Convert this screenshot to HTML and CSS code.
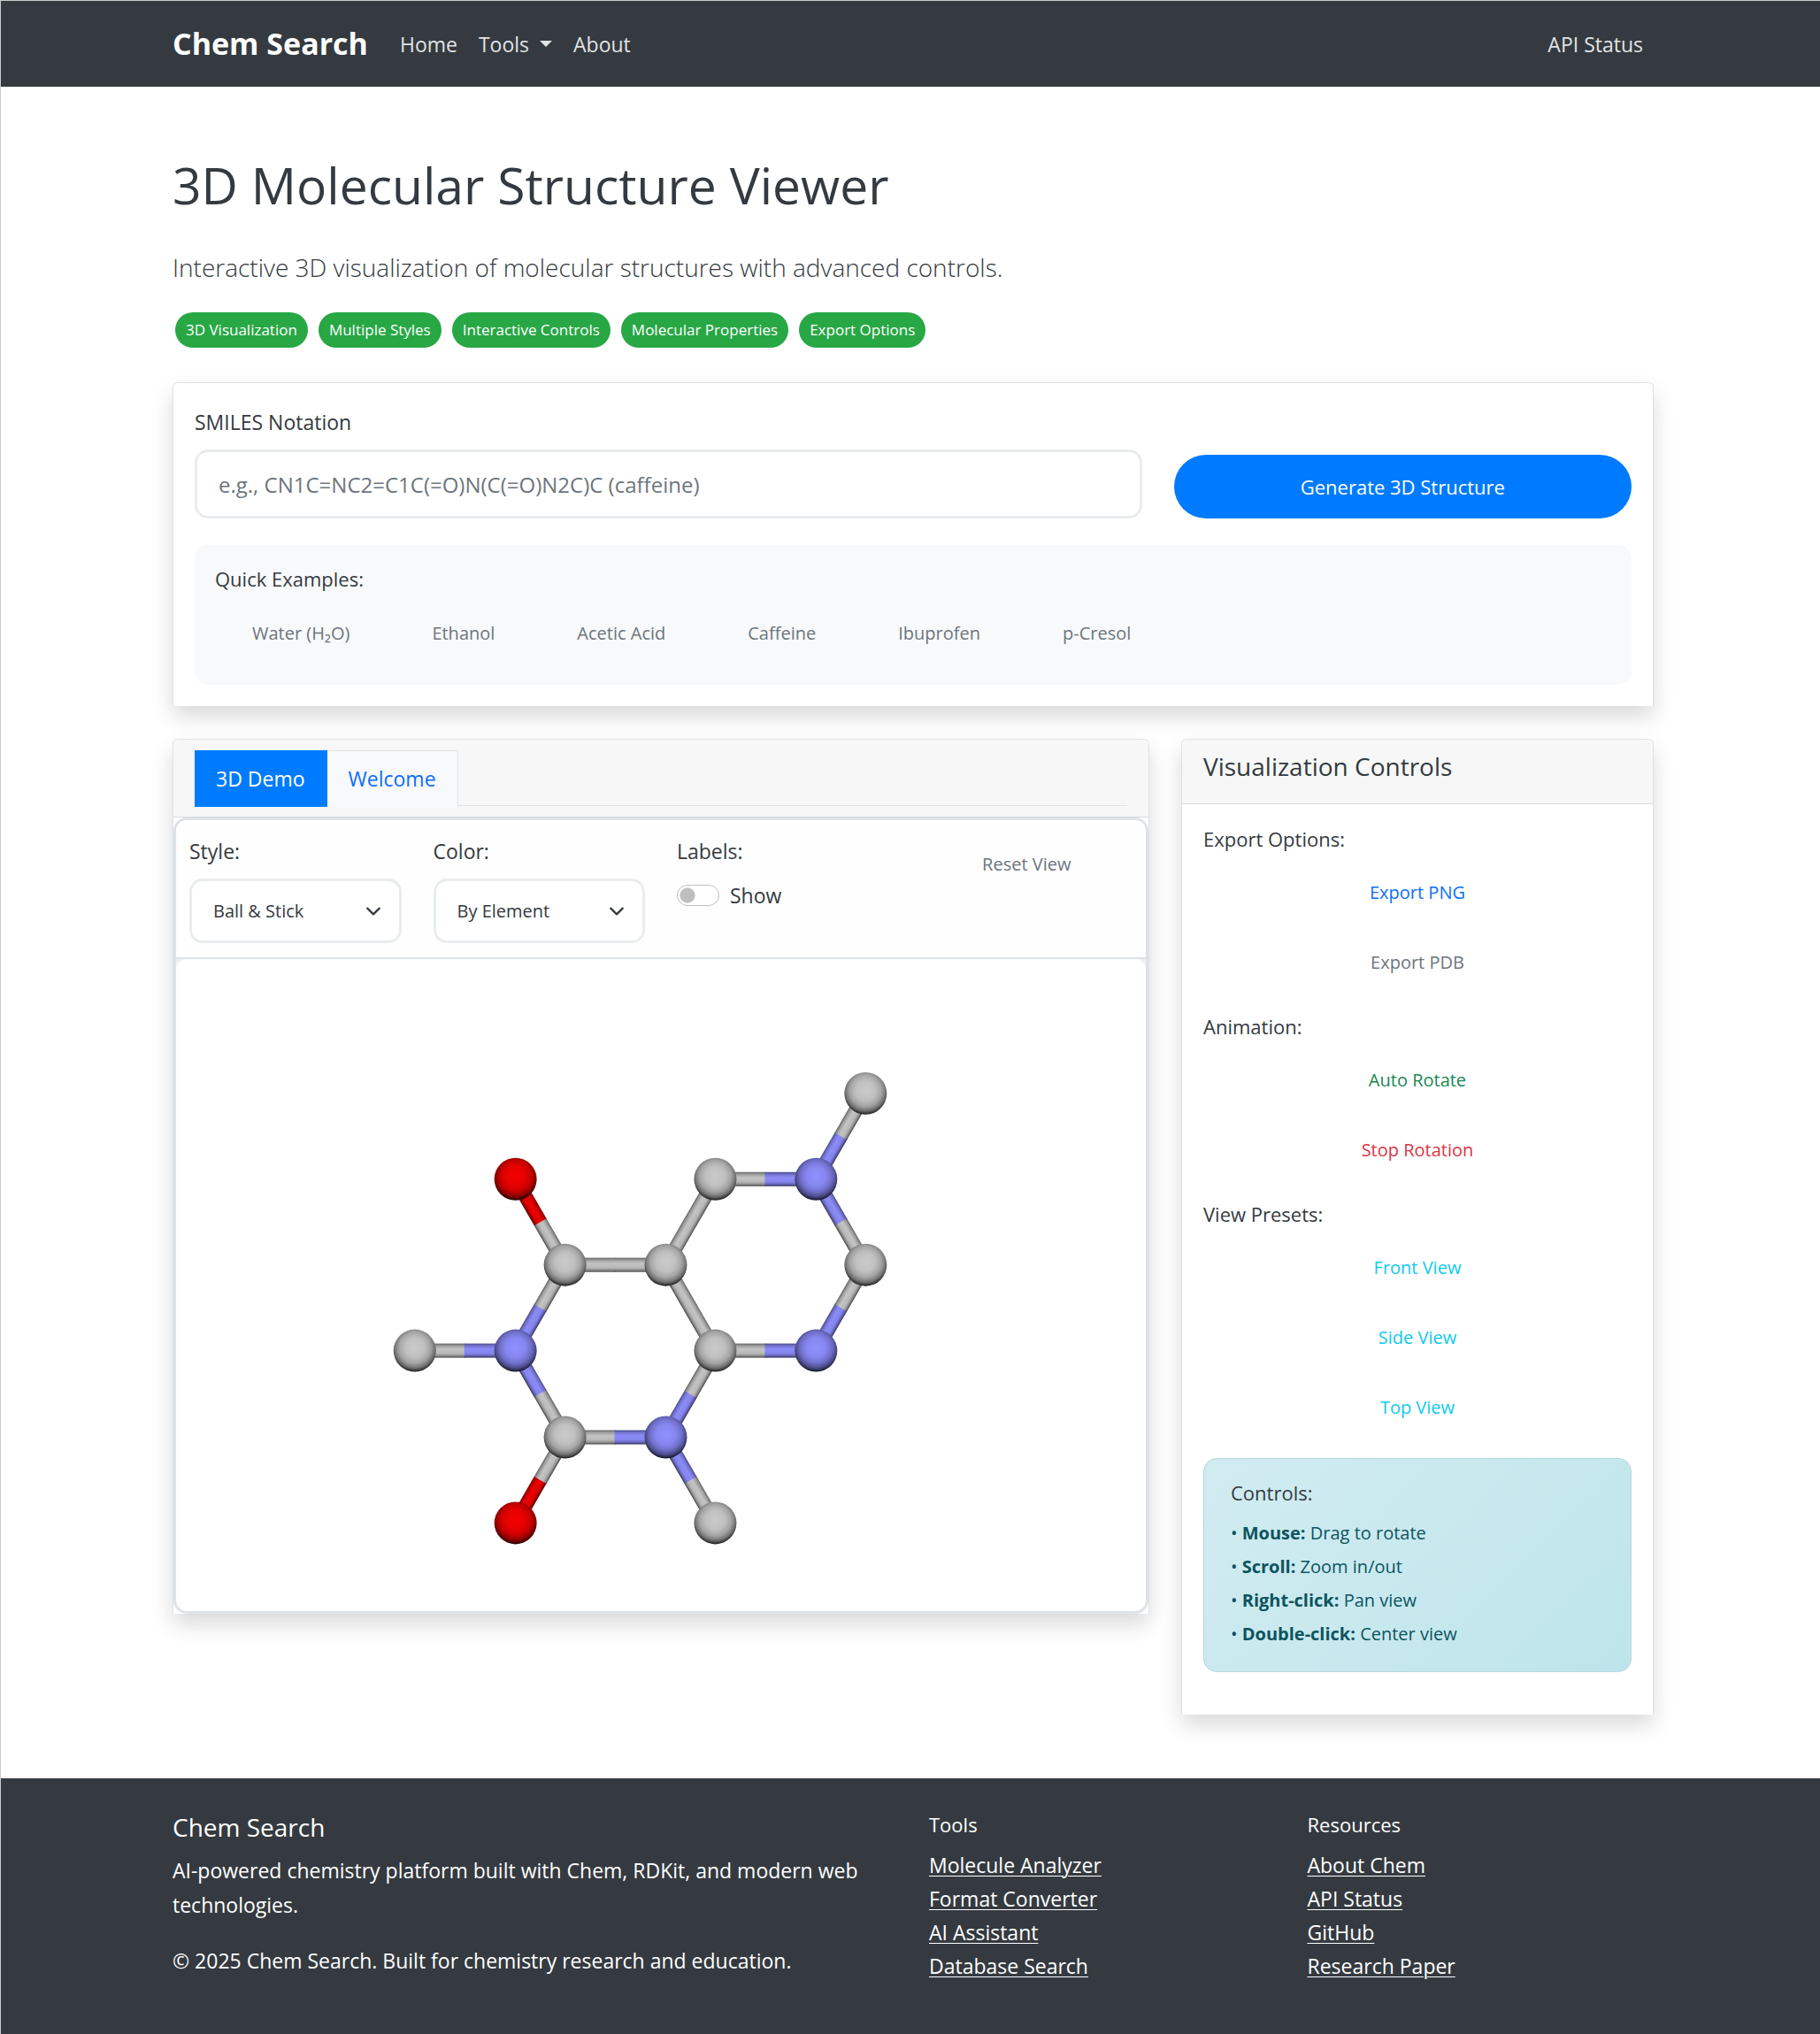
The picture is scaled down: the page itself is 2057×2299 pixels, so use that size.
FILE: index.html
```html
<!DOCTYPE html>
<html lang="en">
<head>
<meta charset="utf-8">
<meta name="viewport" content="width=device-width, initial-scale=1">
<title>3D Molecular Structure Viewer - Chem Search</title>
<link rel="stylesheet" href="styles.css">
</head>
<body>
<header class="site-header">
  <div class="container navbar">
    <a class="brand" href="#">Chem Search</a>
    <nav class="nav" aria-label="Main">
      <a class="nav-link" href="#">Home</a>
      <a class="nav-link dropdown" href="#">Tools</a>
      <a class="nav-link" href="#">About</a>
      <a class="nav-link nav-end" href="#">API Status</a>
    </nav>
  </div>
</header>

<main class="main">
  <div class="container">
    <h1>3D Molecular Structure Viewer</h1>
    <p class="lead">Interactive 3D visualization of molecular structures with advanced controls.</p>
    <div class="badges">
      <span class="badge">3D Visualization</span>
      <span class="badge">Multiple Styles</span>
      <span class="badge">Interactive Controls</span>
      <span class="badge">Molecular Properties</span>
      <span class="badge">Export Options</span>
    </div>

    <section class="card search-card">
      <form class="row row-end">
        <div class="col-8">
          <label class="label" for="smiles">SMILES Notation</label>
          <input class="text-input" id="smiles" type="text" placeholder="e.g., CN1C=NC2=C1C(=O)N(C(=O)N2C)C (caffeine)">
        </div>
        <div class="col-4">
          <button class="btn-primary" type="button">Generate 3D Structure</button>
        </div>
      </form>
      <div class="examples">
        <h2 class="h6">Quick Examples:</h2>
        <div class="example-list">
          <button class="btn gray" type="button">Water (H₂O)</button>
          <button class="btn gray" type="button">Ethanol</button>
          <button class="btn gray" type="button">Acetic Acid</button>
          <button class="btn gray" type="button">Caffeine</button>
          <button class="btn gray" type="button">Ibuprofen</button>
          <button class="btn gray" type="button">p-Cresol</button>
        </div>
      </div>
    </section>

    <div class="row row-start">
      <div class="col-8">
        <section class="card">
          <div class="card-header">
            <div class="tabs" role="tablist">
              <button class="tab active" type="button" role="tab" aria-selected="true">3D Demo</button>
              <button class="tab" type="button" role="tab" aria-selected="false">Welcome</button>
            </div>
          </div>
          <div class="viewer">
            <div class="toolbar">
              <div class="row row-start">
                <div class="col-3">
                  <label class="label" for="style">Style:</label>
                  <select class="select" id="style"><option>Ball &amp; Stick</option></select>
                </div>
                <div class="col-3">
                  <label class="label" for="color">Color:</label>
                  <select class="select" id="color"><option>By Element</option></select>
                </div>
                <div class="col-3">
                  <span class="label">Labels:</span>
                  <label class="switch-row"><input class="switch" type="checkbox" role="switch">Show</label>
                </div>
                <div class="col-3">
                  <button class="btn block gray" type="button">Reset View</button>
                </div>
              </div>
            </div>
            <svg class="canvas" viewBox="-1 0 1097 738" role="img" aria-label="Ball and stick model of caffeine">
              <defs>
                <radialGradient id="gc" cx="50%" cy="43%" r="57%">
                  <stop offset="0" stop-color="#cacaca"/><stop offset=".4" stop-color="#c0c0c0"/><stop offset=".65" stop-color="#a4a4a4"/><stop offset=".83" stop-color="#747474"/><stop offset=".93" stop-color="#444444"/><stop offset="1" stop-color="#141414"/>
                </radialGradient>
                <radialGradient id="gn" cx="50%" cy="43%" r="57%">
                  <stop offset="0" stop-color="#9090ff"/><stop offset=".4" stop-color="#8787f2"/><stop offset=".65" stop-color="#7070ca"/><stop offset=".83" stop-color="#4e4e8e"/><stop offset=".93" stop-color="#2e2e54"/><stop offset="1" stop-color="#0e0e1a"/>
                </radialGradient>
                <radialGradient id="go" cx="50%" cy="43%" r="57%">
                  <stop offset="0" stop-color="#f40000"/><stop offset=".4" stop-color="#e80000"/><stop offset=".65" stop-color="#c40000"/><stop offset=".83" stop-color="#8a0000"/><stop offset=".93" stop-color="#500000"/><stop offset="1" stop-color="#180000"/>
                </radialGradient>
                <linearGradient id="bc" x1="0" y1="0" x2="0" y2="1">
                  <stop offset="0" stop-color="#606060"/><stop offset=".15" stop-color="#9c9c9c"/><stop offset=".4" stop-color="#c4c4c4"/><stop offset=".7" stop-color="#b8b8b8"/><stop offset=".88" stop-color="#888888"/><stop offset="1" stop-color="#404040"/>
                </linearGradient>
                <linearGradient id="bn" x1="0" y1="0" x2="0" y2="1">
                  <stop offset="0" stop-color="#484884"/><stop offset=".15" stop-color="#7272cc"/><stop offset=".4" stop-color="#8c8cfa"/><stop offset=".7" stop-color="#8484ec"/><stop offset=".88" stop-color="#6060ae"/><stop offset="1" stop-color="#2c2c50"/>
                </linearGradient>
                <linearGradient id="bo" x1="0" y1="0" x2="0" y2="1">
                  <stop offset="0" stop-color="#800000"/><stop offset=".15" stop-color="#bc0000"/><stop offset=".4" stop-color="#ee0000"/><stop offset=".7" stop-color="#de0000"/><stop offset=".88" stop-color="#a00000"/><stop offset="1" stop-color="#500000"/>
                </linearGradient>
                <g id="c1"><rect y="-8" width="57" height="16" fill="url(#bc)"/></g>
                <g id="n1"><rect y="-8" width="57" height="16" fill="url(#bn)"/></g>
                <g id="o1"><rect y="-8" width="57" height="16" fill="url(#bo)"/></g>
                <g id="cc"><use href="#c1"/><use href="#c1" x="56"/></g>
                <g id="cn"><use href="#c1"/><use href="#n1" x="56"/></g>
                <g id="nc"><use href="#n1"/><use href="#c1" x="56"/></g>
                <g id="oc"><use href="#o1"/><use href="#c1" x="56"/></g>
                <circle id="C" r="24" fill="url(#gc)"/>
                <circle id="N" r="24" fill="url(#gn)"/>
                <circle id="O" r="24" fill="url(#go)"/>
              </defs>
              <use href="#nc" transform="translate(723 249) rotate(-60)"/>
              <use href="#cn" transform="translate(609 249)"/>
              <use href="#cc" transform="translate(553 346) rotate(-60)"/>
              <use href="#nc" transform="translate(723 249) rotate(60)"/>
              <use href="#nc" transform="translate(723 443) rotate(-60)"/>
              <use href="#cn" transform="translate(609 443)"/>
              <use href="#cc" transform="translate(553 346) rotate(60)"/>
              <use href="#cc" transform="translate(439 346)"/>
              <use href="#oc" transform="translate(383 249) rotate(60)"/>
              <use href="#nc" transform="translate(383 443) rotate(-60)"/>
              <use href="#cn" transform="translate(269 443)"/>
              <use href="#nc" transform="translate(383 443) rotate(60)"/>
              <use href="#oc" transform="translate(383 638) rotate(-60)"/>
              <use href="#cn" transform="translate(439 541)"/>
              <use href="#nc" transform="translate(553 541) rotate(-60)"/>
              <use href="#nc" transform="translate(553 541) rotate(60)"/>
              <use href="#C" x="779" y="152"/>
              <use href="#O" x="383" y="249"/>
              <use href="#C" x="609" y="249"/>
              <use href="#N" x="723" y="249"/>
              <use href="#C" x="439" y="346"/>
              <use href="#C" x="553" y="346"/>
              <use href="#C" x="779" y="346"/>
              <use href="#C" x="269" y="443"/>
              <use href="#N" x="383" y="443"/>
              <use href="#C" x="609" y="443"/>
              <use href="#N" x="723" y="443"/>
              <use href="#C" x="439" y="541"/>
              <use href="#N" x="553" y="541"/>
              <use href="#O" x="383" y="638"/>
              <use href="#C" x="609" y="638"/>
            </svg>
          </div>
        </section>
      </div>

      <div class="col-4">
        <aside class="card">
          <div class="card-header">
            <h2 class="h5">Visualization Controls</h2>
          </div>
          <div class="card-body">
            <h3 class="h6">Export Options:</h3>
            <div class="stack">
              <button class="btn blue" type="button">Export PNG</button>
              <button class="btn gray" type="button">Export PDB</button>
            </div>
            <h3 class="h6">Animation:</h3>
            <div class="stack">
              <button class="btn green" type="button">Auto Rotate</button>
              <button class="btn red" type="button">Stop Rotation</button>
            </div>
            <h3 class="h6">View Presets:</h3>
            <div class="stack">
              <button class="btn cyan" type="button">Front View</button>
              <button class="btn cyan" type="button">Side View</button>
              <button class="btn cyan" type="button">Top View</button>
            </div>
            <div class="info">
              <h3 class="h6">Controls:</h3>
              <p>• <strong>Mouse:</strong> Drag to rotate<br>
              • <strong>Scroll:</strong> Zoom in/out<br>
              • <strong>Right-click:</strong> Pan view<br>
              • <strong>Double-click:</strong> Center view</p>
            </div>
          </div>
        </aside>
      </div>
    </div>
  </div>
</main>

<footer class="footer">
  <div class="container">
    <div class="row row-start">
      <div class="col-6">
        <h2 class="h5">Chem Search</h2>
        <p>AI-powered chemistry platform built with Chem, RDKit, and modern web technologies.</p>
        <p>© 2025 Chem Search. Built for chemistry research and education.</p>
      </div>
      <div class="col-3">
        <h3 class="h6">Tools</h3>
        <ul class="links">
          <li><a href="#">Molecule Analyzer</a></li>
          <li><a href="#">Format Converter</a></li>
          <li><a href="#">AI Assistant</a></li>
          <li><a href="#">Database Search</a></li>
        </ul>
      </div>
      <div class="col-3">
        <h3 class="h6">Resources</h3>
        <ul class="links">
          <li><a href="#">About Chem</a></li>
          <li><a href="#">API Status</a></li>
          <li><a href="#">GitHub</a></li>
          <li><a href="#">Research Paper</a></li>
        </ul>
      </div>
    </div>
  </div>
</footer>
</body>
</html>
```
FILE: styles.css
```css
*, *::before, *::after { box-sizing: border-box; }

body {
  margin: 0;
  min-height: 100vh;
  display: flex;
  flex-direction: column;
  border-top: 1px solid #cccccc;
  border-left: 1px solid #cccccc;
  background: #fff;
  color: #343a40;
  font-family: "Open Sans", "Noto Sans", sans-serif;
  font-size: 23px;
  line-height: 38px;
}

h1, h2, h3, p, ul { margin: 0; padding: 0; font-weight: 400; }
button, input, select { font: inherit; color: inherit; margin: 0; }

.container { width: 100%; max-width: 1710px; margin: 0 auto; padding: 0 18px; }

/* the page frame sits slightly right of the window's centre */
.site-header, .main, .footer { padding-left: 6px; }

.row { display: flex; margin: 0 -18px; }
.row-end { align-items: flex-end; }
.row-start { align-items: flex-start; }
.col-3, .col-4, .col-6, .col-8 { flex: none; padding: 0 18px; }
.col-3 { width: 25%; }
.col-4 { width: 33.3333%; }
.col-6 { width: 50%; }
.col-8 { width: 66.6667%; }

.h5 { font-size: 28px; line-height: 36px; margin-bottom: 12px; }
.h6 { font-size: 22px; line-height: 30px; margin-bottom: 12px; }

/* header */
.site-header { background: #343a40; color: #fff; }
.navbar { display: flex; align-items: center; padding-top: 24px; padding-bottom: 24px; }
.brand { font-size: 34px; line-height: 49px; font-weight: 700; color: #fff; text-decoration: none; margin-right: 24px; }
.nav { display: flex; flex: 1; align-items: center; }
.nav-link { padding: 0 12px; color: #e1e3e4; text-decoration: none; }
.nav-end { margin-left: auto; }
.dropdown { display: flex; align-items: center; gap: 12px; }
.dropdown::after { content: ""; border: 7px solid transparent; border-top-color: currentColor; border-bottom: 0; }

/* intro */
.main { padding-top: 72px; padding-bottom: 72px; }
h1 { font-size: 57px; line-height: 78px; margin-bottom: 30px; }
.lead { font-size: 28px; line-height: 48px; font-weight: 300; margin-bottom: 27px; }
.badges { display: flex; flex-wrap: wrap; gap: 12px; padding: 0 3px; margin-bottom: 39px; }
.badge { padding: 0 12px; border-radius: 20px; background: #28a745; color: #fff; font-size: 17px; line-height: 40px; }

/* cards */
.card { border: 1px solid #dee2e6; border-bottom: 0; border-radius: 6px 6px 0 0; background: #fff; box-shadow: 0 12px 24px rgba(0, 0, 0, .15); }
.card-header { padding: 12px 24px; background: #f7f7f7; border-bottom: 1px solid #d8dadc; border-radius: 5px 5px 0 0; }
.card-body { padding: 24px; }
.search-card { padding: 25px 24px 24px; margin-bottom: 37px; }

.label { display: block; margin-bottom: 12px; }
.text-input { display: block; width: 100%; height: 78px; padding: 0 24px; border: 3px solid #e9ecef; border-radius: 15px; background: #fff; font-size: 24px; }
.text-input::placeholder { color: #6c757d; opacity: 1; }
.btn-primary { display: block; width: 100%; height: 72px; border: 0; border-radius: 36px; background: #007bff; color: #fff; font-size: 22px; }

.btn { padding: 18px 41px; border: 0; background: transparent; font-size: 20px; line-height: 31px; }
.examples { margin-top: 30px; padding: 23px; border-radius: 15px; background: #f8f9fa; }
.example-list { display: flex; flex-wrap: wrap; gap: 9px; }
.example-list .btn { padding: 20px 42px; line-height: 30px; }
.block { display: block; width: 100%; }
.gray { color: #6c757d; }
.blue { color: #0d6efd; }
.green { color: #198754; }
.red { color: #dc3545; }
.cyan { color: #0dcaf0; }

/* tabs */
.tabs { display: flex; border-bottom: 1px solid #dee2e6; }
.tab { margin-bottom: -2px; padding: 6px 24px; border: 1px solid #dee2e6; border-width: 1px 1px 0 0; background: #f8f9fa; color: #0d6efd; line-height: 51px; }
.tab.active { border-color: #007bff; background: #007bff; color: #fff; }

/* viewer */
.viewer { overflow: hidden; border: 3px solid #dee2e6; border-radius: 15px; background: #eef0f2; }
.toolbar { padding: 16px 15px; border-bottom: 2px solid #dee2e6; background: #fefefe; }
.select {
  display: block; width: 100%; height: 73px; padding: 0 24px;
  appearance: none; border: 3px solid #e9ecef; border-radius: 15px; font-size: 20px;
  background: #fff url("data:image/svg+xml,%3Csvg xmlns='http://www.w3.org/2000/svg' viewBox='0 0 16 16'%3E%3Cpath fill='none' stroke='%23343a40' stroke-linecap='round' stroke-linejoin='round' stroke-width='2' d='m2 5 6 6 6-6'/%3E%3C/svg%3E") no-repeat right 20px center / 18px 18px;
}
.switch-row { display: flex; align-items: center; gap: 12px; }
.switch { appearance: none; width: 48px; height: 24px; border: 1px solid #bfbfbf; border-radius: 12px; background: radial-gradient(circle at 11px 11px, #bfbfbf 8px, #fff 9px); }
.canvas { display: block; width: 100%; height: auto; border-radius: 12px; background: #fff; }

/* side panel */
.stack { display: grid; gap: 12px; margin-bottom: 24px; }
.info { margin-bottom: 24px; padding: 23px 30px; border: 1px solid #b5d8df; border-radius: 15px; background: linear-gradient(135deg, #d1ecf1, #bee5eb); }
.info p { color: #0c5460; font-size: 20px; }

/* footer */
.footer { flex: 1; padding-top: 37px; padding-bottom: 36px; background: #343a40; color: #fff; }
.footer p { line-height: 39px; margin-bottom: 24px; }
.links { list-style: none; }
.links a { color: #fff; text-decoration: underline; text-decoration-thickness: 1px; text-underline-offset: 3px; }
```
